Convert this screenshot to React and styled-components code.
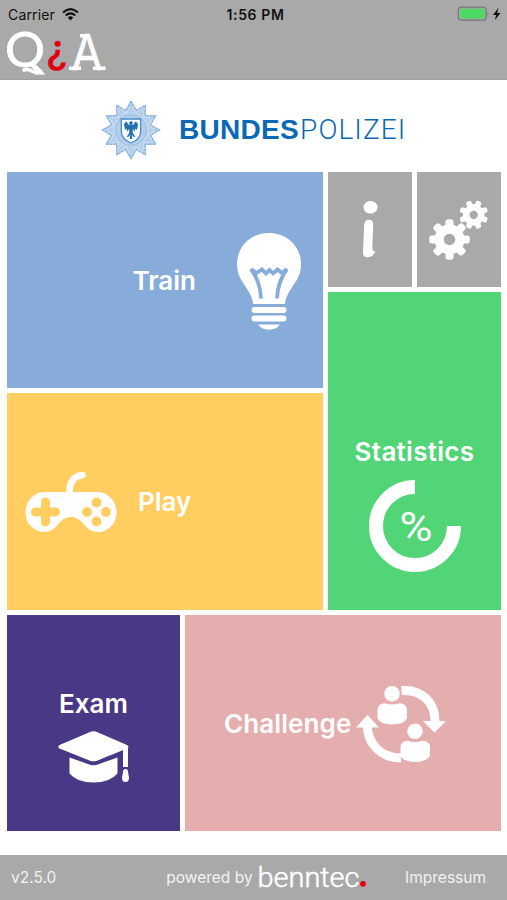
import React from 'react';
import styled, { ThemeProvider, createGlobalStyle } from 'styled-components';

const theme = {
  colors: {
    bar: '#a9a9a9',
    train: '#87acda',
    play: '#ffcd60',
    statistics: '#51d576',
    exam: '#483886',
    challenge: '#e4aeae',
    brand: '#0a68b4',
    red: '#e1000f'
  },
  fonts: {
    primary: 'Inter, "Liberation Sans", sans-serif'
  }
};

const GlobalStyle = createGlobalStyle`
  * {
    margin: 0;
    padding: 0;
    box-sizing: border-box;
  }

  body {
    font-family: ${props => props.theme.fonts.primary};
    background-color: #fff;
  }

  svg {
    display: block;
    flex-shrink: 0;
    overflow: visible;
  }
`;

const Screen = styled.div`
  width: 507px;
  height: 900px;
  display: flex;
  flex-direction: column;
  overflow: hidden;
  background: #fff;
`;

const Header = styled.header`
  height: 80px;
  background: ${props => props.theme.colors.bar};
  border-bottom: 1px solid #a0a0a0;
`;

const StatusBar = styled.div`
  height: 28px;
  display: grid;
  grid-template-columns: 1fr auto 1fr;
  align-items: center;
  padding: 0 6px 0 8px;
  font-size: 14px;
  color: #111;
`;

const Carrier = styled.div`
  display: flex;
  align-items: center;
  gap: 7px;
  letter-spacing: 0.15px;
  line-height: 17px;
`;

const Clock = styled.div`
  font-weight: 600;
  letter-spacing: 0.6px;
  padding-left: 2px;
`;

const Power = styled.div`
  display: flex;
  justify-content: flex-end;
`;

const Brand = styled.div`
  height: 92px;
  display: flex;
  align-items: center;
  padding: 7px 0 0 101px;
  gap: 18px;
`;

const BrandName = styled.h1`
  display: flex;
  align-items: baseline;
  font-family: "Liberation Sans", sans-serif;
  font-size: 28px;
  line-height: 32px;
  font-weight: 700;
  letter-spacing: 0.3px;
  color: ${props => props.theme.colors.brand};
`;

const BrandLight = styled.span`
  font-family: Roboto, sans-serif;
  font-weight: 300;
  letter-spacing: 1.1px;
  margin-left: 1px;
`;

const Board = styled.main`
  display: flex;
  flex-direction: column;
  gap: 5px;
  padding: 0 6px 0 7px;
`;

const Upper = styled.div`
  height: 438px;
  display: grid;
  grid-template-columns: 316px 173px;
  gap: 5px;
`;

const Column = styled.div`
  display: grid;
  grid-template-rows: ${props => props.$rows};
  gap: 5px;
`;

const Pair = styled.div`
  display: grid;
  grid-template-columns: 1fr 1fr;
  gap: 5px;
`;

const Lower = styled.div`
  height: 216px;
  display: grid;
  grid-template-columns: 173px 316px;
  gap: 5px;
`;

const Tile = styled.button`
  display: flex;
  flex-direction: ${props => (props.$stacked ? 'column' : 'row')};
  align-items: center;
  justify-content: ${props => props.$justify || 'flex-start'};
  gap: ${props => props.$gap || 0}px;
  padding: ${props => props.$pad || 0};
  border: 0;
  color: #fff;
  font-family: inherit;
  background: ${props => props.theme.colors[props.$tone]};
`;

const Label = styled.span`
  font-size: 26px;
  line-height: 32px;
  font-weight: 600;
  letter-spacing: ${props => props.$spacing || 0}px;
`;

const Footer = styled.footer`
  height: 45px;
  margin-top: auto;
  display: flex;
  align-items: center;
  padding: 0 21px 0 11px;
  background: ${props => props.theme.colors.bar};
  color: #f2f2f2;
  font-size: 15.5px;
`;

const Powered = styled.div`
  display: flex;
  align-items: center;
  gap: 6px;
  margin: 0 auto 0 110px;
`;

function AppLogo() {
  return (
    <svg width="120" height="50" viewBox="0 28 120 50">
      <text x="5" y="67" fontSize="49" fill="#fff" stroke="#fff" strokeWidth="0.8" fontFamily="Lato, sans-serif" fontWeight="400" textLength="40" lengthAdjust="spacingAndGlyphs">Q</text>
      <path d="M24 70Q28 68.500 33 71.500T40.500 71" fill="none" stroke="#fff" strokeWidth="3.600" strokeLinecap="round" />
      <text x="46.5" y="63" fontSize="39" fill={theme.colors.red} stroke={theme.colors.red} strokeWidth="0.5" fontFamily="Inter, sans-serif" fontWeight="500">¿</text>
      <text x="71.5" y="70" fontSize="49" fill="#fff" stroke="#fff" strokeWidth="0.5" fontFamily="Inter, sans-serif" fontWeight="400" textLength="31" lengthAdjust="spacingAndGlyphs">A</text>
      <path d="M69 68.300H81M93 68.300H105.500M80 35.800H90" stroke="#fff" strokeWidth="3.600" />
    </svg>
  );
}

function WifiIcon() {
  return (
    <svg width="17" height="13" viewBox="0 0 17 13" fill="none" stroke="#111" strokeWidth="2.2">
      <path d="M1 4.5Q8.5-2.2 16 4.5" />
      <path d="M3.7 7.5Q8.5 3.2 13.3 7.5" />
      <path d="M5.8 9.5Q8.5 7.2 11.2 9.5L8.5 12.4Z" fill="#111" stroke="none" />
    </svg>
  );
}

function BatteryIcon() {
  return (
    <svg width="44" height="16" viewBox="0 0 44 16">
      <rect x="1.3" y="1.2" width="27.8" height="13" rx="3" fill="none" stroke="#777" strokeWidth="1.3" />
      <rect x="3" y="2.8" width="24.4" height="9.8" rx="1.2" fill="#4cd964" />
      <path d="M30.5 5.5q2 2.2 0 4.4z" fill="#777" />
      <path d="M41.5 1.8L36 9h3.2l-1.4 5.2L43.5 7h-3.3z" fill="#111" />
    </svg>
  );
}

const starPoints = Array.from({ length: 24 }, (_, i) => {
  const r = i % 2 ? 20 : 28.5;
  const a = (i * Math.PI) / 12;
  return `${30 + r * Math.sin(a)},${30 - r * Math.cos(a)}`;
}).join(' ');

function PoliceStar() {
  return (
    <svg width="60" height="60" viewBox="0 0 60 60">
      <polygon points={starPoints} fill="#c6daf0" stroke="#a9c7e8" strokeWidth="1.600" strokeLinejoin="round" />
      <polygon points={starPoints} fill="none" stroke="#78a5d8" strokeWidth="1.200" strokeDasharray="1.300 2.400" />
      {Array.from({ length: 12 }, (_, i) => (
        <path key={i} d="M30 13V4M27 14l2-5M33 14l-2-5" stroke="#9fc0e4" strokeWidth="0.700" transform={`rotate(${i * 30} 30 30)`} />
      ))}
      <circle cx="30" cy="30" r="15.500" fill="#b3cfec" stroke="#8fb5df" strokeWidth="0.800" />
      <path d="M20.300 19h19.400v12q0 8.500-9.700 12-9.700-3.500-9.700-12z" fill="#f4faff" stroke="#4a8bc9" strokeWidth="1.300" />
      <path
        d="M30 21q2.200 0 1.500 2.500l-.5 1.500q2.500-.3 3-3.500 3 1 3 3l-1 5.500-1.600-1.500-.6 3-2-2.500v4l2.600 4-2-.3-1.600-2 .5 4.300h-2.600l.5-4.300-1.600 2-2 .3 2.600-4v-4l-2 2.500-.6-3-1.600 1.500-1-5.500q0-2 3-3 .5 3.200 3 3.500l-1.200-2z"
        fill="#2a70b0"
      />
    </svg>
  );
}

function BulbIcon() {
  return (
    <svg width="64" height="97" viewBox="0 0 64 97" fill="#fff">
      <path d="M32 0C13.500 0 0 13.500 0 31.500 0 44.500 7.500 51 12.300 59.500 15 64.500 15.800 67.500 16 71H48C48.200 67.500 49 64.500 51.700 59.500 56.500 51 64 44.500 64 31.500 64 13.500 50.500 0 32 0Z" />
      <path
        d="M24 65.500C23.500 54 20 44 14 36L19.500 40 25 36.500 29 40.500 32.500 37 36 40.500 40.500 36.500 45 40 50 36C44 44 40.500 54 40 65.500"
        fill="none"
        stroke={theme.colors.train}
        strokeWidth="3.800"
      />
      <rect x="14.500" y="74" width="35" height="6" rx="3" />
      <rect x="14.500" y="82.500" width="35" height="6" rx="3" />
      <path d="M21 91.500H43Q39 96.700 32 96.700T21 91.500Z" />
    </svg>
  );
}

function InfoIcon() {
  return (
    <svg width="16" height="58" viewBox="0 0 16 58" fill="#fff">
      <ellipse cx="8.500" cy="6.200" rx="7" ry="6.300" />
      <path d="M2.200 24Q2.600 18.800 7 18.800 11.400 18.800 11.200 24L10.400 45Q10.300 49.500 11 49.700L13.300 50.500Q10.500 56.500 5 56.300 .8 56 1 51Z" />
    </svg>
  );
}

function Gear({ cx, cy, r, tooth, hole, turn }) {
  return (
    <g transform={`translate(${cx} ${cy}) rotate(${turn})`}>
      {Array.from({ length: 8 }, (_, i) => (
        <rect key={i} x={-tooth / 2} y={-r} width={tooth} height={r * 0.6} rx={tooth * 0.34} fill="#fff" transform={`rotate(${i * 45})`} />
      ))}
      <circle r={(r * 0.74 + hole) / 2} fill="none" stroke="#fff" strokeWidth={r * 0.74 - hole} />
    </g>
  );
}

function GearsIcon() {
  return (
    <svg width="60" height="60" viewBox="0 0 60 60">
      <Gear cx={20.5} cy={39.5} r={20.3} tooth={8} hole={5.8} turn={0} />
      <Gear cx={44.7} cy={14.8} r={14.5} tooth={5.6} hole={4.2} turn={22.5} />
    </svg>
  );
}

function GamepadIcon() {
  return (
    <svg width="92" height="62" viewBox="0 0 92 62">
      <path d="M44.500 24C44 12 48 5 57.500 4" fill="none" stroke="#fff" strokeWidth="6.600" strokeLinecap="round" />
      <path d="M20 21H72C83 21 91.500 30 91.500 41.500 91.500 53 83 61 73 61 59 61 59 46 46 46 33 46 33 61 19.500 61 9 61 .5 53 .5 41.500 .5 30 9 21 20 21Z" fill="#fff" />
      <path d="M20.500 31V51M10.500 41H30.500" stroke={theme.colors.play} strokeWidth="9" strokeLinecap="round" />
      <g fill={theme.colors.play}>
        <circle cx="71.500" cy="31.500" r="4.900" />
        <circle cx="71.500" cy="50.500" r="4.900" />
        <circle cx="62" cy="41" r="4.900" />
        <circle cx="81" cy="41" r="4.900" />
      </g>
    </svg>
  );
}

function PercentIcon() {
  return (
    <svg width="92" height="92" viewBox="0 0 92 92">
      <path d="M46 7A39 39 0 1 0 85 46" fill="none" stroke="#fff" strokeWidth="14" />
      <text x="47" y="60.500" fontSize="40" textAnchor="middle" fill="#fff" fontFamily="Roboto, sans-serif" textLength="33" lengthAdjust="spacingAndGlyphs">%</text>
    </svg>
  );
}

function CapIcon() {
  return (
    <svg width="72" height="52" viewBox="0 0 72 52" fill="#fff">
      <path d="M31.500 1.200Q35.500-.5 39.500 1.200L69 14Q72 16 69 17.500L39.500 29.500Q35.500 31.200 31.500 29.500L1.500 17.500Q-1 16 1.500 14Z" />
      <path d="M11.500 26.500L32 33.700Q35.500 35 39 33.700L59.500 26.500V42.500Q52 51.500 35.500 51.500T11.500 42.500Z" />
      <path d="M65 17H70V36H65Z" />
      <path d="M67.500 38Q70 38 70 41L71 46.500Q71 51 67.500 51T64 46.500L65 41Q65 38 67.500 38Z" />
    </svg>
  );
}

function Person({ x, y }) {
  return (
    <g transform={`translate(${x} ${y})`} fill="#fff">
      <circle cx="14.500" cy="7.800" r="7.700" />
      <path d="M7 17.200Q14.500 20 22 17.200 29 17.200 29.500 24V32Q27 38.500 14.700 38.500T0 32V24Q.5 17.200 7 17.200Z" />
    </g>
  );
}

function ChallengeIcon() {
  return (
    <svg width="90" height="78" viewBox="0 0 90 78">
      <g fill="none" stroke="#fff" strokeWidth="9">
        <path d="M45.500 5.500C67 4 79.500 19 79 37" />
        <path d="M11 38C11 58 24 73 45 73" />
      </g>
      <path d="M67 36H90L78.500 47.500ZM0 42.500L11.500 30 23 42.500Z" fill="#fff" />
      <Person x={21.5} y={1} />
      <Person x={44.5} y={38.5} />
    </svg>
  );
}

function BenntecLogo() {
  return (
    <svg width="110" height="28" viewBox="0 0 110 28">
      <text x="-1.500" y="22.500" fontSize="27" fill="#fff" stroke="#fff" strokeWidth="0.500" fontFamily="Roboto, sans-serif" fontWeight="300" textLength="102" lengthAdjust="spacingAndGlyphs">benntec</text>
      <circle cx="104" cy="19.800" r="2.900" fill={theme.colors.red} />
    </svg>
  );
}

function App() {
  return (
    <ThemeProvider theme={theme}>
      <GlobalStyle />
      <Screen>
        <Header>
          <StatusBar>
            <Carrier>
              Carrier
              <WifiIcon />
            </Carrier>
            <Clock>1:56 PM</Clock>
            <Power>
              <BatteryIcon />
            </Power>
          </StatusBar>
          <AppLogo />
        </Header>
        <Brand>
          <PoliceStar />
          <BrandName>
            BUNDES<BrandLight>POLIZEI</BrandLight>
          </BrandName>
        </Brand>
        <Board>
          <Upper>
            <Column $rows="216px 217px">
              <Tile $tone="train" $justify="flex-end" $gap={41} $pad="2px 22px 0 0">
                <Label>Train</Label>
                <BulbIcon />
              </Tile>
              <Tile $tone="play" $gap={21} $pad="0 0 0 18px">
                <GamepadIcon />
                <Label>Play</Label>
              </Tile>
            </Column>
            <Column $rows="115px 318px">
              <Pair>
                <Tile $tone="bar" $justify="center">
                  <InfoIcon />
                </Tile>
                <Tile $tone="bar" $justify="center">
                  <GearsIcon />
                </Tile>
              </Pair>
              <Tile $tone="statistics" $stacked $gap={12} $pad="144px 0 0">
                <Label $spacing={0.3}>Statistics</Label>
                <PercentIcon />
              </Tile>
            </Column>
          </Upper>
          <Lower>
            <Tile $tone="exam" $stacked $gap={11} $pad="73px 0 0">
              <Label>Exam</Label>
              <CapIcon />
            </Tile>
            <Tile $tone="challenge" $gap={5} $pad="1px 0 0 39px">
              <Label $spacing={0.1}>Challenge</Label>
              <ChallengeIcon />
            </Tile>
          </Lower>
        </Board>
        <Footer>
          <span>v2.5.0</span>
          <Powered>
            powered by
            <BenntecLogo />
          </Powered>
          <span>Impressum</span>
        </Footer>
      </Screen>
    </ThemeProvider>
  );
}

export default App;
